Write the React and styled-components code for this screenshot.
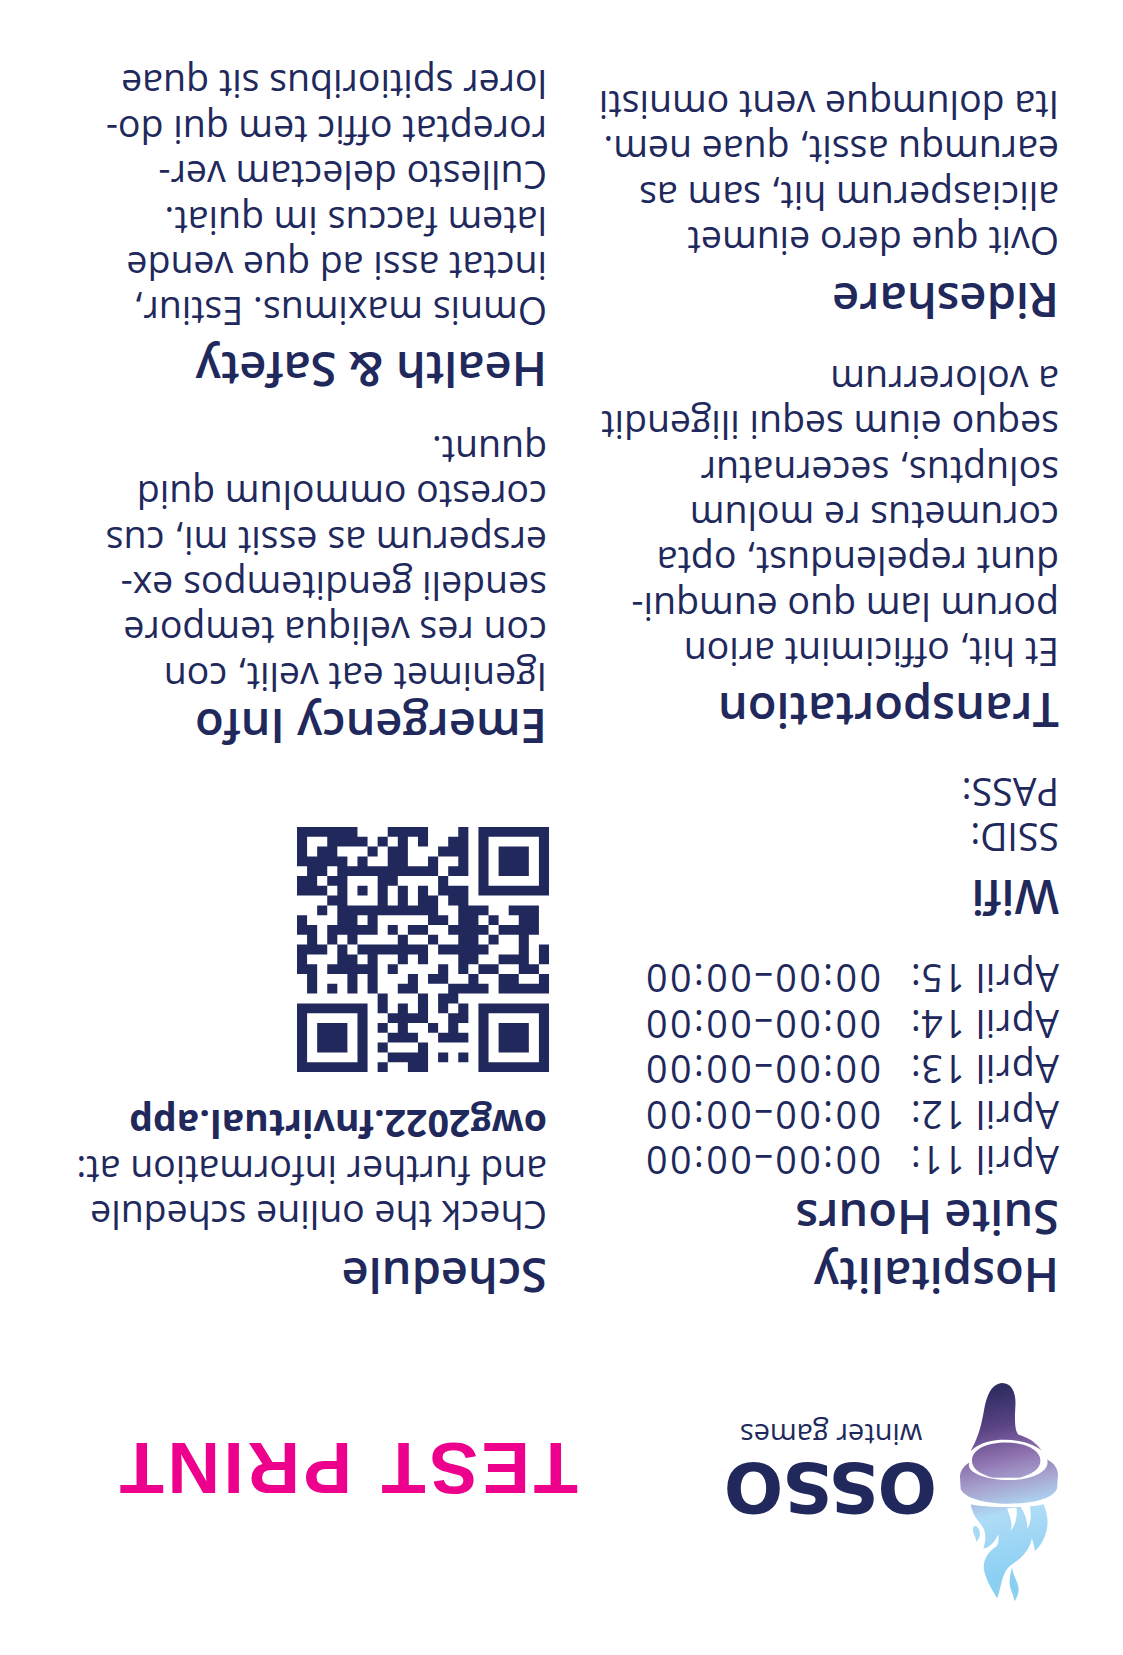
import React from "react";
import styled, { createGlobalStyle } from "styled-components";

const Global = createGlobalStyle`
  html, body { margin: 0; padding: 0; background: #fff; }
`;

const Sheet = styled.main`
  width: 1123px;
  height: 1655px;
  overflow: hidden;
  box-sizing: border-box;
  padding: 53px 0 0 64px;
  background: #fff;
  color: #21295c;
  font-family: "Open Sans", sans-serif;
  transform: rotate(180deg);
`;

const Header = styled.header`
  display: grid;
  grid-template-columns: 512px 1fr;
  height: 297px;
`;

const Logo = styled.div`
  display: flex;
  align-items: flex-start;
  gap: 26px;
  margin-left: 1px;
`;

const Wordmark = styled.div`
  display: flex;
  flex-direction: column;
  align-items: center;
  width: 206px;
  padding-top: 80px;
`;

const Brand = styled.div`
  font-family: "DejaVu Sans", sans-serif;
  font-weight: 700;
  font-size: 70px;
  line-height: 70px;
  letter-spacing: -1.2px;
`;

const Tagline = styled.div`
  font-size: 29px;
  line-height: 34px;
  white-space: nowrap;
`;

const Stamp = styled.div`
  font-family: "Liberation Sans", sans-serif;
  font-weight: 700;
  font-size: 72.7px;
  line-height: 76px;
  letter-spacing: 3.6px;
  word-spacing: 2px;
  color: #ec008c;
  margin: 96px 0 0 -31px;
  white-space: nowrap;
`;

const Columns = styled.div`
  display: grid;
  grid-template-columns: 512px 1fr;
`;

const Column = styled.div`
  display: flex;
  flex-direction: column;
`;

const Section = styled.section`
  display: flex;
  flex-direction: column;
  margin-top: ${(p) => p.$top || 0}px;
`;

const Heading = styled.h2`
  margin: 0 0 ${(p) => p.$after || 0}px;
  font-size: 47px;
  line-height: 58px;
  font-weight: 600;
  white-space: nowrap;
`;

const Line = styled.div`
  font-size: 37.5px;
  line-height: 45.4px;
  white-space: nowrap;
  font-weight: ${(p) => (p.$bold ? 700 : 400)};
`;

const Hours = styled.div`
  display: grid;
  grid-template-columns: 178px auto;
  font-size: 37.5px;
  line-height: 45.4px;
  white-space: nowrap;
`;

const Day = styled.span`
  letter-spacing: 0.6px;
`;

const Time = styled.span`
  letter-spacing: 2.5px;
`;

const QrBox = styled.svg`
  display: block;
  width: 252px;
  height: 245px;
  margin: 30px 0 71px -2px;
`;

const qr = [
  "1111110001111000101111111",
  "1001111010101001101000001",
  "1011000101100011101011101",
  "1111101001100100101011101",
  "0110111111111101101011101",
  "1101100011000010001000001",
  "1110101010101011101111111",
  "0001100010101101100000000",
  "0010111111111100111001110",
  "1000110100000110110100110",
  "1101111101011001111011110",
  "0101010000100100110100100",
  "1110101111111011111000101",
  "1000110100101000110011101",
  "1101111101000010101100110",
  "0100010100010110010011001",
  "0101010100110001111011111",
  "0000000010001011000000000",
  "1111111010101010101111111",
  "1000001001111001101000001",
  "1011101010100101001011101",
  "1011101001110011101011101",
  "1011101010001000001011101",
  "1000001001111010101000001",
  "1111111010011000001111111",
];

function QrCode() {
  let d = "";
  qr.forEach((row, r) => {
    [...row].forEach((v, c) => {
      if (v === "1") d += `M${24 - c} ${24 - r}h1v1h-1z`;
    });
  });
  return (
    <QrBox viewBox="0 0 25 25" preserveAspectRatio="none">
      <path d={d} fill="#21295c" />
    </QrBox>
  );
}

function Torch() {
  return (
    <svg width="98" height="220" viewBox="780 65 295 660" style={{ flex: "none" }}>
      <defs>
        <linearGradient id="torch" gradientUnits="userSpaceOnUse" x1="870" y1="90" x2="990" y2="640">
          <stop offset="0" stopColor="#2e2d61" />
          <stop offset="0.2" stopColor="#5b4485" />
          <stop offset="0.36" stopColor="#8d70ae" />
          <stop offset="0.5" stopColor="#a7a3cf" />
          <stop offset="0.66" stopColor="#aedcf6" />
          <stop offset="1" stopColor="#8bcff3" />
        </linearGradient>
      </defs>
      <g transform="rotate(180 927.5 395)">
        <g fill="url(#torch)">
          <path d="M905 67C880 70 866 92 856 130C848 165 846 210 812 272C840 245 880 238 915 238C960 238 1000 250 1025 270C1010 245 985 232 955 222C943 205 945 170 947 130C948 95 935 66 905 67Z" />
          <path d="M816 300C816 265 865 246 918 246C975 246 1022 268 1022 300C1022 322 1005 338 960 352L880 352C840 342 816 325 816 300Z" />
          <path d="M808 306C790 318 780 332 780 350L782 385C792 412 850 430 925 430C1000 430 1060 415 1072 385L1075 340C1073 320 1060 306 1042 297C1050 318 1030 345 968 356C950 360 900 360 880 355C830 346 800 330 808 306Z" />
          <path d="M812 432C850 442 990 445 1031 432C1048 470 1048 505 1030 540C1022 555 1014 565 1005 572C1004 556 1000 545 996 535C990 570 965 595 930 618C905 640 905 680 892 715C880 695 860 665 852 630C848 600 865 575 885 562C895 555 898 540 895 522C885 545 870 562 850 565C860 540 858 510 845 495C832 478 818 465 812 432Z" />
          <path d="M820 500C830 490 842 510 840 525C838 535 832 542 828 545C830 530 815 520 820 500Z" />
          <path d="M936 622C940 650 960 670 956 695C953 710 948 718 944 724C942 700 925 685 930 655C932 640 934 630 936 622Z" />
        </g>
        <path d="M922 445C930 470 940 490 932 512C947 495 953 470 950 442Z" fill="#fff" />
        <path d="M962 438C974 460 985 480 982 505C994 490 995 465 990 436Z" fill="#fff" />
      </g>
    </svg>
  );
}

const lines = (arr) => arr.map((t, i) => <Line key={i}>{t}</Line>);

export default function App() {
  return (
    <>
      <Global />
      <Sheet>
        <Header>
          <Logo>
            <Torch />
            <Wordmark>
              <Brand>OSSO</Brand>
              <Tagline>winter games</Tagline>
            </Wordmark>
          </Logo>
          <Stamp>TEST PRINT</Stamp>
        </Header>
        <Columns>
          <Column>
            <Section>
              <Heading>Hospitality</Heading>
              <Heading $after={6}>Suite Hours</Heading>
              {[11, 12, 13, 14, 15].map((d) => (
                <Hours key={d}>
                  <Day>April {d}:</Day>
                  <Time>00:00–00:00</Time>
                </Hours>
              ))}
            </Section>
            <Section $top={29}>
              <Heading $after={9}>Wifi</Heading>
              {lines(["SSID:", "PASS:"])}
            </Section>
            <Section $top={29}>
              <Heading $after={7}>Transportation</Heading>
              {lines([
                "Et hit, officimint arion",
                "porum lam quo eumqui-",
                "dunt repelendust, opta",
                "corumetus re molum",
                "soluptus, secernatur",
                "sequo eium sequi iligendit",
                "a volorerrum",
              ])}
            </Section>
            <Section $top={27}>
              <Heading $after={8}>Rideshare</Heading>
              {lines([
                "Ovit que dero eiumet",
                "aliciasperum hit, sam as",
                "earumqu assit, quae nem.",
                "Ita dolumque vent omnisti",
              ])}
            </Section>
          </Column>
          <Column>
            <Section>
              <Heading $after={9}>Schedule</Heading>
              {lines(["Check the online schedule", "and further information at:"])}
              <Line $bold>owg2022.fnvirtual.app</Line>
              <QrCode />
              <Heading $after={-2}>Emergency Info</Heading>
              {lines([
                "Igenimet eat velit, con",
                "con res veliqua tempore",
                "sendeli genditempos ex-",
                "ersperum as essit mi, cus",
                "coresto ommolum quid",
                "quunt.",
              ])}
            </Section>
            <Section $top={28}>
              <Heading $after={7}>Health &amp; Safety</Heading>
              {lines([
                "Omnis maximus. Estiur,",
                "inctat assi ad que vende",
                "latem faccus im quiat.",
                "Cullesto delectam ver-",
                "roreptat offic tem qui do-",
                "lorer spitioribus sit quae",
              ])}
            </Section>
          </Column>
        </Columns>
      </Sheet>
    </>
  );
}
